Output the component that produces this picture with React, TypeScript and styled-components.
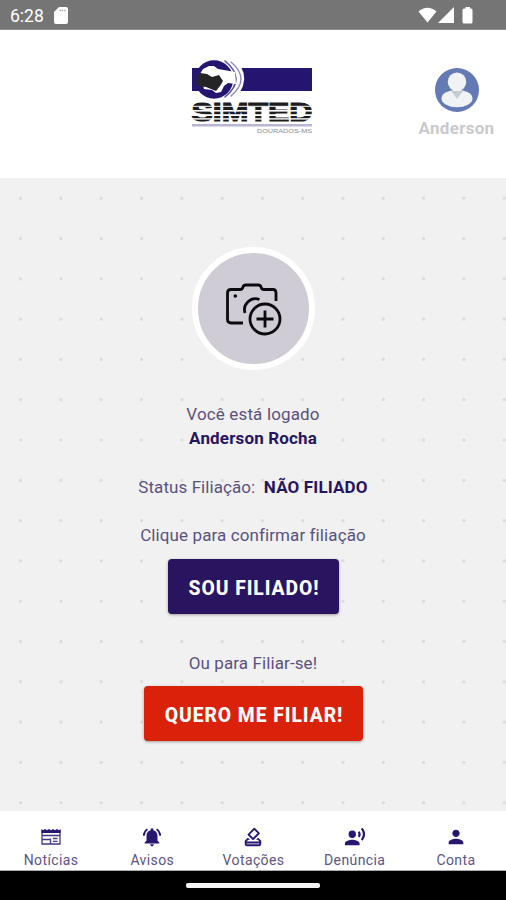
import React from "react";
import styled, { createGlobalStyle } from "styled-components";
import {
  MdNotificationsActive,
  MdOutlineHowToVote,
  MdRecordVoiceOver,
  MdPerson,
} from "react-icons/md";

const GlobalStyle = createGlobalStyle`
  * { box-sizing: border-box; }
  body { margin: 0; font-family: Roboto, "Liberation Sans", sans-serif; }
`;

const Screen = styled.div`
  width: 506px;
  height: 900px;
  display: flex;
  flex-direction: column;
  overflow: hidden;
  background: #fff;
`;

const StatusBar = styled.div`
  height: 30px;
  flex: none;
  padding: 2px 32px 0 10px;
  display: flex;
  align-items: center;
  justify-content: space-between;
  background: #757575;
  border-bottom: 1px solid #8f8f8f;
  color: #fff;
  font-size: 17.5px;
`;

const StatusGroup = styled.div<{ $gap: number }>`
  display: flex;
  align-items: center;
  gap: ${(p) => p.$gap}px;
`;

const Header = styled.header`
  height: 148px;
  flex: none;
  display: grid;
  grid-template-columns: 1fr 126px 1fr;
  align-items: start;
  background: #fff;
`;

const LogoSlot = styled.div`
  grid-column: 2;
  padding-top: 28px;
  svg { display: block; }
`;

const Profile = styled.div`
  justify-self: end;
  width: 99px;
  padding-top: 38px;
  display: flex;
  flex-direction: column;
  align-items: center;
  gap: 6px;
`;

const ProfileName = styled.span`
  font-size: 17px;
  line-height: 20px;
  font-weight: 700;
  letter-spacing: 0.3px;
  color: #c9c9ce;
`;

const Main = styled.main`
  height: 633px;
  flex: none;
  padding-top: 69px;
  display: flex;
  flex-direction: column;
  align-items: center;
  background-color: #f1f1f1;
  background-image: radial-gradient(circle, #d6d6d8 0, #dadadc 1.1px, transparent 1.9px);
  background-size: 40.3px 40.3px;
  background-position: 0.5px 0.1px;
`;

const PhotoButton = styled.button`
  width: 123px;
  height: 123px;
  padding: 0 0 0 2px;
  border: 6px solid #fff;
  border-radius: 50%;
  background: #cfccd5;
  display: flex;
  align-items: center;
  justify-content: center;
  margin-bottom: 32px;
`;

const Line = styled.p<{ $spacing?: number; $gap?: number; $bold?: boolean }>`
  margin: 0 0 ${(p) => p.$gap ?? 0}px;
  font-size: 17px;
  line-height: 24px;
  white-space: pre;
  color: ${(p) => (p.$bold ? "#27165f" : "#5a517f")};
  font-weight: ${(p) => (p.$bold ? 700 : 400)};
  letter-spacing: ${(p) => p.$spacing ?? 0}px;
`;

const Strong = styled.strong`
  font-weight: 700;
  color: #27165f;
  letter-spacing: 0.15px;
`;

const ActionButton = styled.button<{ $color: string; $width: number; $gap?: number }>`
  width: ${(p) => p.$width}px;
  height: 55px;
  padding: 3px 0 0 2px;
  margin-bottom: ${(p) => p.$gap ?? 0}px;
  border: 0;
  border-radius: 4px;
  background: ${(p) => p.$color};
  box-shadow: 0 1px 3px rgba(0, 0, 0, 0.35);
  color: #fff;
  font-family: inherit;
  font-size: 19.3px;
  font-weight: 800;
  letter-spacing: 0.95px;
  white-space: nowrap;
`;

const BottomNav = styled.nav`
  height: 60px;
  flex: none;
  display: grid;
  grid-template-columns: repeat(5, 1fr);
  background: #fff;
  border-bottom: 1px solid #aaa;
`;

const NavItem = styled.a`
  padding: 15px 0 0 1px;
  display: flex;
  flex-direction: column;
  align-items: center;
  color: #281670;
  svg { display: block; }
`;

const NavLabel = styled.span`
  margin-top: 3px;
  font-size: 14px;
  line-height: 18px;
  font-weight: 400;
  letter-spacing: 0.4px;
  color: #5d5585;
`;

const SystemBar = styled.div`
  height: 29px;
  flex: none;
  padding-top: 12px;
  background: #000;
`;

const HomeHandle = styled.div`
  width: 134px;
  height: 5px;
  margin: 0 auto;
  border-radius: 2px;
  background: #f4f4f4;
`;

const Logo = () => (
  <svg width="126" height="80" viewBox="0 0 126 80">
    <rect x="2" y="10" width="120" height="23" fill="#261570" />
    <path d="M30 2 Q44 3 51 9 Q58 21 50 34 Q42 41 30 40Z" fill="#fff" />
    <g fill="none" strokeLinecap="round">
      <path d="M35 3 Q57 21 35 39" stroke="#5a4f9b" strokeWidth="1.6" />
      <path d="M41 4 Q61 21 41 38" stroke="#8f88bb" strokeWidth="1.4" />
    </g>
    <circle cx="24" cy="21.5" r="19.2" fill="#261570" />
    <path d="M10 16 L13 11 L19 8 L24 8 L28 11 L34 12 L45 14 L46 26 L38 25 L34 28 L31 34 L26 35 L22 32 L14 31Z" fill="#fff" />
    <path d="M10 15 L17 16 L22 19 L29 17 L33 23 L30 28 L26 33 L21 31 L16 29 L7 28 Q5 21 10 15Z" fill="#242426" />
    <text x="1.5" y="62.5" textLength="121" lengthAdjust="spacingAndGlyphs" fontFamily="Liberation Sans, sans-serif" fontWeight="700" fontSize="26.5" fill="#1c1c1e" stroke="#1c1c1e" strokeWidth="1.2">SIMTED</text>
    <g fill="#fff">
      <rect x="0" y="47.8" width="126" height="1" />
      <rect x="0" y="52" width="126" height="1.6" />
      <rect x="0" y="56.2" width="126" height="1.8" />
      <rect x="0" y="60.2" width="126" height="1.4" />
    </g>
    <rect x="2" y="66" width="120" height="2.5" fill="#b9b5d4" />
    <text x="67" y="75.3" textLength="55" lengthAdjust="spacingAndGlyphs" fontFamily="Liberation Sans, sans-serif" fontSize="6" fill="#8a8a90">DOURADOS-MS</text>
  </svg>
);

const Avatar = () => (
  <svg width="44" height="44" viewBox="0 0 44 44">
    <circle cx="22" cy="22" r="22" fill="#647ab5" />
    <ellipse cx="22" cy="30.5" rx="15.5" ry="8.8" fill="#f0f3f5" />
    <path d="M16 23 H28 L22 31Z" fill="#c9cccf" />
    <circle cx="22" cy="13.8" r="9.3" fill="#f0f3f5" />
  </svg>
);

const CameraPlus = () => (
  <svg width="58" height="54" viewBox="0 0 58 54" fill="none" stroke="#0b0b0d" strokeWidth="2.8">
    <path d="M18 41 H6 Q2.5 41 2.5 37.5 V11 Q2.5 7.5 6 7.5 H15 Q17.5 7.5 18 5 Q18.5 3 21 3 H33 Q35.5 3 36 5 Q36.5 7.5 39 7.5 H48 Q51 7.5 51 11 V19" />
    <path d="M20 31 A11 11 0 0 1 34.5 17.5" />
    <circle cx="10.3" cy="14" r="1.8" fill="#0b0b0d" stroke="none" />
    <circle cx="40" cy="37" r="15" />
    <path d="M40 28.5 V45.5 M31.5 37 H48.5" />
  </svg>
);

const NewsIcon = () => (
  <svg width="22" height="22" viewBox="0 0 22 22" fill="none" stroke="#443884" strokeWidth="1.3">
    <path d="M2 4 V18 H20 V4 M2 9.5 H20 M2 13.5 H10.5 M10.5 12.5 V18 M13 12.5 H17.5 M13 15.3 H17.5" />
    <path d="M1.5 3 L3 4.3 L5 3 L7 4.3 L9 3 L11 4.3 L13 3 L15 4.3 L17 3 L19 4.3 L20.5 3 V7 H1.5Z" fill="#281670" stroke="none" />
  </svg>
);

const navItems = [
  { label: "Notícias", icon: <NewsIcon /> },
  { label: "Avisos", icon: <MdNotificationsActive size={22} /> },
  { label: "Votações", icon: <MdOutlineHowToVote size={22} /> },
  { label: "Denúncia", icon: <MdRecordVoiceOver size={22} /> },
  { label: "Conta", icon: <MdPerson size={22} /> },
];

export default function App() {
  return (
    <Screen>
      <GlobalStyle />
      <StatusBar>
        <StatusGroup $gap={10}>
          <span>6:28</span>
          <svg width="14" height="17" viewBox="0 0 14 17">
            <path d="M5 0 H12 Q14 0 14 2 V15 Q14 17 12 17 H2 Q0 17 0 15 V5Z" fill="#fff" />
            <path d="M5.5 3.5 H11.5" stroke="#aaa" strokeWidth="1.6" strokeDasharray="1.5 0.7" />
          </svg>
        </StatusGroup>
        <StatusGroup $gap={0}>
          <svg width="56" height="18" viewBox="0 0 56 18" fill="#fff">
            <path d="M0.5 4.5 Q9.5 -3 18.5 4.5 L9.5 15.5Z" />
            <path d="M20 16 L36 0 V16Z" />
            <path d="M46 1.5 H47.5 V0 H52 V1.5 H53 Q54.5 1.5 54.5 3 V15 Q54.5 16.5 53 16.5 H46 Q44.5 16.5 44.5 15 V3 Q44.5 1.5 46 1.5Z" />
          </svg>
        </StatusGroup>
      </StatusBar>
      <Header>
        <LogoSlot>
          <Logo />
        </LogoSlot>
        <Profile>
          <Avatar />
          <ProfileName>Anderson</ProfileName>
        </Profile>
      </Header>
      <Main>
        <PhotoButton aria-label="Adicionar foto">
          <CameraPlus />
        </PhotoButton>
        <Line $spacing={0.15}>Você está logado</Line>
        <Line $bold $gap={25} $spacing={0.15}>Anderson Rocha</Line>
        <Line $gap={24} $spacing={0.07}>
          Status Filiação:{"  "}
          <Strong>NÃO FILIADO</Strong>
        </Line>
        <Line $gap={12} $spacing={0.1}>Clique para confirmar filiação</Line>
        <ActionButton $color="#29145f" $width={171} $gap={37}>SOU FILIADO!</ActionButton>
        <Line $gap={11} $spacing={0.1}>Ou para Filiar-se!</Line>
        <ActionButton $color="#da210a" $width={219}>QUERO ME FILIAR!</ActionButton>
      </Main>
      <BottomNav>
        {navItems.map((item) => (
          <NavItem key={item.label}>
            {item.icon}
            <NavLabel>{item.label}</NavLabel>
          </NavItem>
        ))}
      </BottomNav>
      <SystemBar>
        <HomeHandle />
      </SystemBar>
    </Screen>
  );
}
